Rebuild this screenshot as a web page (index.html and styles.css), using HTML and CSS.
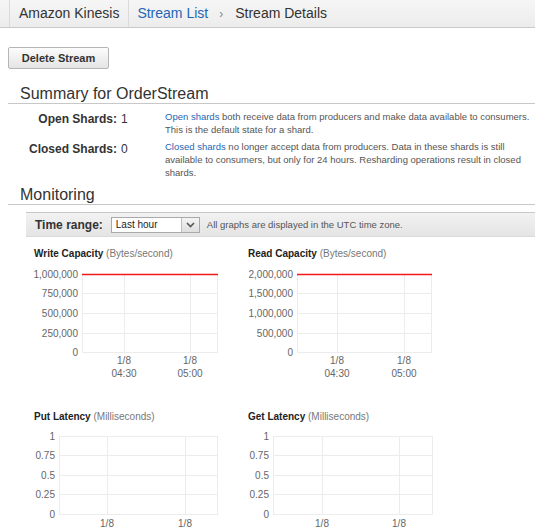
FILE: index.html
```html
<!DOCTYPE html>
<html>
<head>
<meta charset="utf-8">
<title>Stream Details</title>
<link rel="stylesheet" href="styles.css">
</head>
<body>
<header class="crumbs">
  <div class="crumb home">Amazon Kinesis</div>
  <a class="crumb link" href="#">Stream List</a>
  <span class="crumb-sep">›</span>
  <span class="crumb current">Stream Details</span>
</header>
<main class="page">
  <button class="btn">Delete Stream</button>

  <h2 class="section-title">Summary for OrderStream</h2>
  <div class="shards">
    <div class="shard-row">
      <div class="shard-label">Open Shards:</div>
      <div class="shard-value">1</div>
      <p class="shard-desc"><a href="#">Open shards</a> both receive data from producers and make data available to consumers. This is the default state for a shard.</p>
    </div>
    <div class="shard-row">
      <div class="shard-label">Closed Shards:</div>
      <div class="shard-value">0</div>
      <p class="shard-desc"><a href="#">Closed shards</a> no longer accept data from producers. Data in these shards is still available to consumers, but only for 24 hours. Resharding operations result in closed shards.</p>
    </div>
  </div>

  <h2 class="section-title">Monitoring</h2>
  <div class="toolbar">
    <span class="tb-label">Time range:</span>
    <div class="select">
      <span class="select-text">Last hour</span>
      <span class="select-btn"><svg width="9" height="6" viewBox="0 0 9 6"><path d="M1 1 L4.5 4.5 L8 1" fill="none" stroke="#555" stroke-width="1.6"/></svg></span>
    </div>
    <span class="tb-note">All graphs are displayed in the UTC time zone.</span>
  </div>

  <div class="charts">
    <figure class="chart">
      <div class="chart-title"><b>Write Capacity</b> <span class="unit">(Bytes/second)</span></div>
      <svg class="plot" width="214" height="120" viewBox="0 0 214 120">
        <g class="grid">
          <line x1="48" y1="32.5" x2="183" y2="32.5"/>
          <line x1="48" y1="52.5" x2="183" y2="52.5"/>
          <line x1="48" y1="72.5" x2="183" y2="72.5"/>
          <line x1="48" y1="91.5" x2="184" y2="91.5"/>
          <line x1="48.5" y1="13" x2="48.5" y2="92"/>
          <line x1="90.5" y1="13" x2="90.5" y2="92"/>
          <line x1="156.5" y1="13" x2="156.5" y2="92"/>
          <line x1="183.5" y1="13" x2="183.5" y2="92"/>
        </g>
        <line class="series" x1="48" y1="13.5" x2="184" y2="13.5"/>
        <g class="ylab">
          <text x="44" y="17">1,000,000</text>
          <text x="44" y="36">750,000</text>
          <text x="44" y="56">500,000</text>
          <text x="44" y="76">250,000</text>
          <text x="44" y="95">0</text>
        </g>
        <g class="xlab">
          <text x="90" y="103">1/8</text><text x="90" y="116">04:30</text>
          <text x="156" y="103">1/8</text><text x="156" y="116">05:00</text>
        </g>
      </svg>
    </figure>

    <figure class="chart">
      <div class="chart-title"><b>Read Capacity</b> <span class="unit">(Bytes/second)</span></div>
      <svg class="plot" width="214" height="120" viewBox="0 0 214 120">
        <g class="grid">
          <line x1="49" y1="32.5" x2="183" y2="32.5"/>
          <line x1="49" y1="52.5" x2="183" y2="52.5"/>
          <line x1="49" y1="72.5" x2="183" y2="72.5"/>
          <line x1="49" y1="91.5" x2="184" y2="91.5"/>
          <line x1="49.5" y1="13" x2="49.5" y2="92"/>
          <line x1="89.5" y1="13" x2="89.5" y2="92"/>
          <line x1="156.5" y1="13" x2="156.5" y2="92"/>
          <line x1="183.5" y1="13" x2="183.5" y2="92"/>
        </g>
        <line class="series" x1="49" y1="13.5" x2="184" y2="13.5"/>
        <g class="ylab">
          <text x="45" y="17">2,000,000</text>
          <text x="45" y="36">1,500,000</text>
          <text x="45" y="56">1,000,000</text>
          <text x="45" y="76">500,000</text>
          <text x="45" y="95">0</text>
        </g>
        <g class="xlab">
          <text x="89" y="103">1/8</text><text x="89" y="116">04:30</text>
          <text x="156" y="103">1/8</text><text x="156" y="116">05:00</text>
        </g>
      </svg>
    </figure>

    <figure class="chart">
      <div class="chart-title"><b>Put Latency</b> <span class="unit">(Milliseconds)</span></div>
      <svg class="plot" width="214" height="120" viewBox="0 0 214 120">
        <g class="grid">
          <line x1="25" y1="12.5" x2="183" y2="12.5"/>
          <line x1="25" y1="31.5" x2="183" y2="31.5"/>
          <line x1="25" y1="51.5" x2="183" y2="51.5"/>
          <line x1="25" y1="70.5" x2="183" y2="70.5"/>
          <line x1="25" y1="90.5" x2="184" y2="90.5"/>
          <line x1="25.5" y1="12" x2="25.5" y2="91"/>
          <line x1="73.5" y1="12" x2="73.5" y2="91"/>
          <line x1="151.5" y1="12" x2="151.5" y2="91"/>
          <line x1="183.5" y1="12" x2="183.5" y2="91"/>
        </g>
        <g class="ylab">
          <text x="21" y="16">1</text>
          <text x="21" y="35">0.75</text>
          <text x="21" y="55">0.5</text>
          <text x="21" y="74">0.25</text>
          <text x="21" y="94">0</text>
        </g>
        <g class="xlab">
          <text x="73" y="103">1/8</text><text x="73" y="116">04:30</text>
          <text x="151" y="103">1/8</text><text x="151" y="116">05:00</text>
        </g>
      </svg>
    </figure>

    <figure class="chart">
      <div class="chart-title"><b>Get Latency</b> <span class="unit">(Milliseconds)</span></div>
      <svg class="plot" width="214" height="120" viewBox="0 0 214 120">
        <g class="grid">
          <line x1="25" y1="12.5" x2="184" y2="12.5"/>
          <line x1="25" y1="31.5" x2="184" y2="31.5"/>
          <line x1="25" y1="51.5" x2="184" y2="51.5"/>
          <line x1="25" y1="70.5" x2="184" y2="70.5"/>
          <line x1="25" y1="90.5" x2="185" y2="90.5"/>
          <line x1="25.5" y1="12" x2="25.5" y2="91"/>
          <line x1="74.5" y1="12" x2="74.5" y2="91"/>
          <line x1="151.5" y1="12" x2="151.5" y2="91"/>
          <line x1="184.5" y1="12" x2="184.5" y2="91"/>
        </g>
        <g class="ylab">
          <text x="21" y="16">1</text>
          <text x="21" y="35">0.75</text>
          <text x="21" y="55">0.5</text>
          <text x="21" y="74">0.25</text>
          <text x="21" y="94">0</text>
        </g>
        <g class="xlab">
          <text x="74" y="103">1/8</text><text x="74" y="116">04:30</text>
          <text x="151" y="103">1/8</text><text x="151" y="116">05:00</text>
        </g>
      </svg>
    </figure>
  </div>
</main>
</body>
</html>
```

FILE: styles.css
```css
html {
  overflow: hidden;
}
body {
  margin: 0;
  font-family: "Liberation Sans", Arial, sans-serif;
  color: #333;
  background: #fff;
}

/* breadcrumb bar */
.crumbs {
  display: flex;
  align-items: center;
  height: 27px;
  background: linear-gradient(#f6f6f6, #ececec);
  border-bottom: 1px solid #c9c9c9;
  font-size: 14px;
  padding-left: 9px;
}
.crumb {
  line-height: 27px;
}
.crumb.home {
  padding: 0 9px;
  height: 27px;
  border-left: 1px solid #dadada;
  border-right: 1px solid #dadada;
  color: #333;
}
.crumb.link {
  margin-left: 8px;
  color: #1f66b5;
  text-decoration: none;
}
.crumb-sep {
  margin: 0 12px 0 11px;
  color: #888;
  font-size: 12px;
}
.crumb.current {
  color: #333;
}

.page {
  padding-left: 8px;
}

.btn {
  display: block;
  margin-top: 19px;
  width: 101px;
  height: 22px;
  padding: 0;
  font-family: inherit;
  font-size: 11px;
  font-weight: bold;
  color: #333;
  background: linear-gradient(#fcfcfc, #e4e4e4);
  border: 1px solid #b5b5b5;
  border-radius: 2px;
}

.section-title {
  margin: 15px 0 0;
  padding-left: 12px;
  font-size: 16px;
  font-weight: normal;
  line-height: 19px;
  color: #333;
  border-bottom: 1px solid #c8c8c8;
}

.shards {
  margin-top: 6px;
  padding-bottom: 1px;
}
.shard-row {
  display: flex;
  margin-bottom: 4px;
}
.shard-label {
  width: 109px;
  text-align: right;
  font-size: 12px;
  font-weight: bold;
  line-height: 14px;
  padding-top: 2px;
}
.shard-value {
  width: 48px;
  padding-left: 4px;
  box-sizing: border-box;
  font-size: 12px;
  line-height: 14px;
  padding-top: 2px;
}
.shard-desc {
  flex: 1;
  margin: 0;
  padding-right: 3px;
  font-size: 9.5px;
  line-height: 13px;
  color: #555;
}
.shard-desc a {
  color: #1f66b5;
  text-decoration: none;
}

.shards + .section-title {
  margin-top: 1px;
}

.toolbar {
  display: flex;
  align-items: center;
  margin: 7px 0 0 18px;
  height: 23px;
  background: linear-gradient(#f2f2f2, #e4e4e4);
  border-top: 1px solid #c8c8c8;
  border-bottom: 1px solid #dadada;
}
.tb-label {
  margin-left: 9px;
  font-size: 12px;
  font-weight: bold;
  color: #333;
}
.select {
  display: flex;
  margin-left: 8px;
  width: 89px;
  height: 16px;
  box-sizing: border-box;
  border: 1px solid #a9a9a9;
  background: #fff;
}
.select-text {
  flex: 1;
  padding-left: 4px;
  font-size: 10px;
  line-height: 14px;
  color: #222;
}
.select-btn {
  width: 17px;
  display: flex;
  align-items: center;
  justify-content: center;
  border-left: 1px solid #bdbdbd;
  background: linear-gradient(#f4f4f4, #dedede);
}
.tb-note {
  margin-left: 7px;
  font-size: 9.5px;
  color: #555;
}

/* charts */
.charts {
  display: grid;
  grid-template-columns: 214px 214px;
  row-gap: 29px;
  margin: 10px 0 0 26px;
}
.chart {
  margin: 0;
}
.chart-title {
  height: 14px;
  line-height: 14px;
  font-size: 10px;
  color: #222;
}
.chart-title .unit {
  color: #777;
}
.plot {
  display: block;
}
.grid line {
  stroke: #ececec;
  stroke-width: 1;
}
.series {
  stroke: #f01a1a;
  stroke-width: 1.5;
}
.ylab text {
  font-family: "Liberation Sans", Arial, sans-serif;
  font-size: 10px;
  fill: #666;
  text-anchor: end;
}
.xlab text {
  font-family: "Liberation Sans", Arial, sans-serif;
  font-size: 10px;
  fill: #666;
  text-anchor: middle;
}
```
